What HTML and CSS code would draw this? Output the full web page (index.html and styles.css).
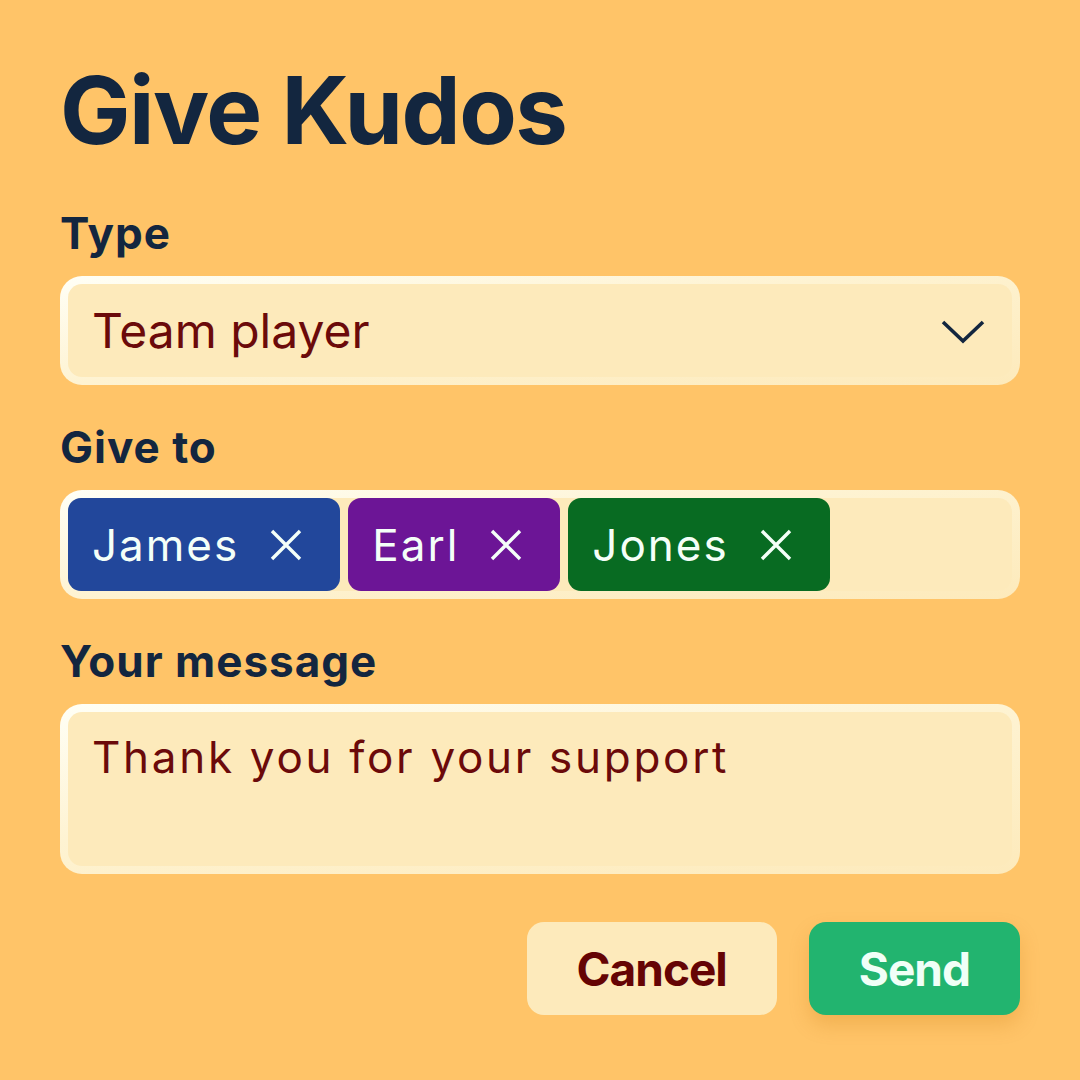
FILE: index.html
```html
<!DOCTYPE html>
<html lang="en">
<head>
<meta charset="utf-8">
<title>Give Kudos</title>
<link rel="stylesheet" href="styles.css">
</head>
<body>
<main class="page">
  <h1 class="title">Give Kudos</h1>

  <section class="group">
    <label class="label">Type</label>
    <div class="field select">
      <span class="select-value">Team player</span>
      <svg class="chevron" width="44" height="26" viewBox="0 0 44 26" aria-hidden="true">
        <path d="M2 3 L22 22 L42 3" fill="none" stroke="#13263F" stroke-width="3.6" stroke-linecap="butt" stroke-linejoin="miter"/>
      </svg>
    </div>
  </section>

  <section class="group">
    <label class="label">Give to</label>
    <div class="field tags">
      <span class="tag tag-blue">James<svg class="x" viewBox="0 0 32 32" width="32" height="32"><path d="M2 2 L30 30 M30 2 L2 30" stroke="currentColor" stroke-width="3.4" fill="none"/></svg></span>
      <span class="tag tag-purple">Earl<svg class="x" viewBox="0 0 32 32" width="32" height="32"><path d="M2 2 L30 30 M30 2 L2 30" stroke="currentColor" stroke-width="3.4" fill="none"/></svg></span>
      <span class="tag tag-green">Jones<svg class="x" viewBox="0 0 32 32" width="32" height="32"><path d="M2 2 L30 30 M30 2 L2 30" stroke="currentColor" stroke-width="3.4" fill="none"/></svg></span>
    </div>
  </section>

  <section class="group">
    <label class="label">Your message</label>
    <div class="field message">Thank you for your support</div>
  </section>

  <div class="actions">
    <button class="btn btn-cancel">Cancel</button>
    <button class="btn btn-send">Send</button>
  </div>
</main>
</body>
</html>
```

FILE: styles.css
```css
html, body {
  margin: 0;
  padding: 0;
  background: #FFC468;
}

body {
  font-family: Inter, "Noto Sans", "Liberation Sans", sans-serif;
  color: #13263F;
  width: 1080px;
  height: 1080px;
  overflow: hidden;
}

.page {
  padding: 62px 60px 0 60px;
  display: flex;
  flex-direction: column;
}

.title {
  margin: 0 0 49px 0;
  font-size: 94px;
  line-height: 96px;
  font-weight: 700;
  letter-spacing: -1.5px;
  color: #13263F;
}

.group {
  display: flex;
  flex-direction: column;
  margin-bottom: 36px;
}

.label {
  display: block;
  font-size: 44px;
  line-height: 52px;
  font-weight: 700;
  letter-spacing: 1px;
  color: #13263F;
  margin-bottom: 17px;
}

.field {
  box-sizing: border-box;
  border: 8px solid transparent;
  border-radius: 22px;
  background:
    linear-gradient(#FDEABB, #FDEABB) padding-box,
    linear-gradient(172deg, #FFFFF6 0%, #FEF3D2 45%, #FDEABB 100%) border-box;
}

.select {
  height: 109px;
  display: flex;
  align-items: center;
  justify-content: space-between;
  padding: 0 27px 0 24px;
}

.select-value {
  font-size: 48px;
  font-weight: 400;
  color: #6B0A0A;
}

.chevron {
  display: block;
  margin-top: 2px;
}

.tags {
  height: 109px;
  display: flex;
  align-items: stretch;
  gap: 8px;
}

.tag {
  display: flex;
  align-items: center;
  gap: 31px;
  padding: 0 38px 0 24px;
  border-radius: 13px;
  font-size: 44px;
  letter-spacing: 2px;
  color: #F4FFF8;
}

.tag .x {
  display: block;
  width: 32px;
  height: 32px;
}

.tag-blue { background: #22479B; }
.tag-purple { background: #6C1596; }
.tag-green { background: #086B22; }

.message {
  height: 170px;
  padding: 19px 24px;
  font-size: 44px;
  line-height: 53px;
  letter-spacing: 2.7px;
  color: #6B0A0A;
}

.actions {
  margin-top: 12px;
  display: flex;
  justify-content: flex-end;
  gap: 32px;
}

.btn {
  height: 93px;
  border: none;
  border-radius: 17px;
  padding: 0 50px;
  font-family: Inter, "Noto Sans", "Liberation Sans", sans-serif;
  font-size: 46px;
  font-weight: 700;
  letter-spacing: -1px;
  cursor: pointer;
}

.btn-cancel {
  background: #FDEABB;
  color: #650404;
}

.btn-send {
  background: #22B46F;
  color: #F0FFF7;
  box-shadow: 0 10px 20px rgba(190, 110, 0, 0.22);
}
```
